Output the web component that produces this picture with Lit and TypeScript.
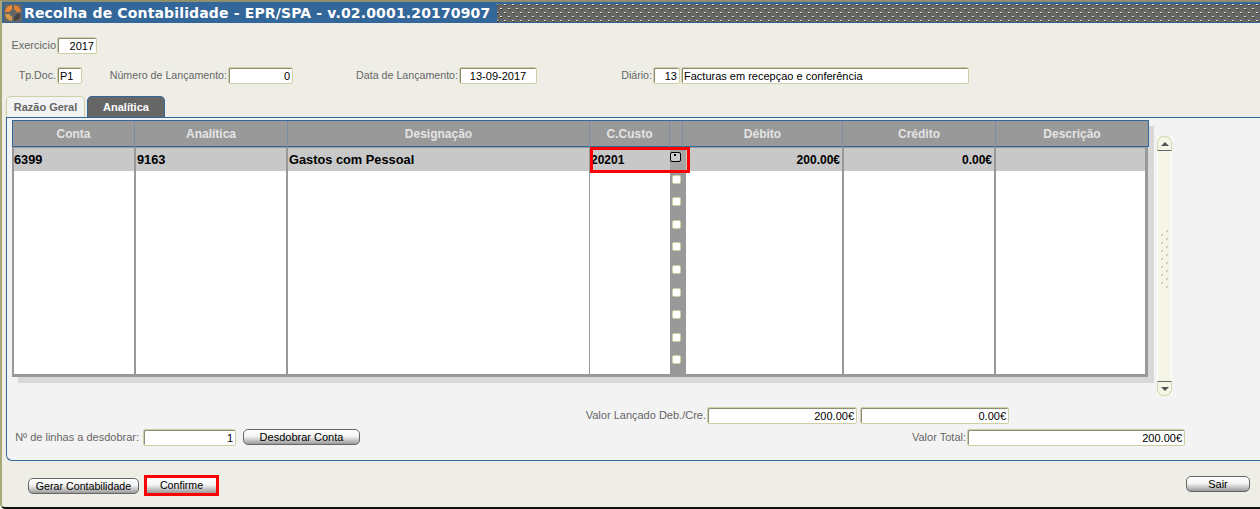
import { LitElement, html, css, svg } from "lit";
import { customElement } from "lit/decorators.js";

const rows = Array.from({ length: 10 }, (_, i) => i);

@customElement("app-root")
export class AppRoot extends LitElement {
  static styles = css`
    :host { display: block; width: 1260px; height: 509px; overflow: hidden; font-family: "Liberation Sans", Arial, sans-serif; font-size: 11px; color: #000; }
    * { box-sizing: border-box; }
    .win { width: 1260px; height: 509px; background: #eeeee6; border-top: 2px solid #8f8f70; border-left: 2px solid #a8a878; border-bottom: 2px solid #111; border-bottom-left-radius: 5px; display: flex; flex-direction: column; overflow: hidden; }
    .title { height: 21px; flex: none; background: #336699; display: flex; align-items: center; padding-left: 2px; }
    .logo { flex: none; display: block; }
    .title-text { flex: none; width: 475px; padding-left: 2px; font-family: "DejaVu Sans", Verdana, sans-serif; font-weight: bold; font-size: 14px; letter-spacing: 0.15px; color: #fff; white-space: nowrap; }
    .dots { flex: 1; height: 18px; display: block; }
    .line { display: flex; align-items: center; height: 17px; flex: none; }
    .l1 { margin-top: 14px; }
    .l2 { margin-top: 13px; }
    .lab { color: #666; white-space: nowrap; line-height: 17px; font-size: 11px; text-align: right; margin-right: 1px; flex: none; }
    .l2 .lab { font-size: 10.67px; }
    .field { height: 17px; background: #fff; border: 1px solid #cfcfa6; border-radius: 2px; box-shadow: inset 1px 1px 0 #8c8c78; line-height: 15px; padding: 1px 2px 0 2px; white-space: nowrap; overflow: hidden; flex: none; text-align: left; }
    .r { text-align: right; }
    .ctr { text-align: center; }
    .w-lab-doc { width: 54px; }
    .w-lab-num { width: 145px; }
    .w-lab-data { width: 165px; }
    .w-lab-diario { width: 115px; }
    .w-40 { width: 40px; }
    .w-25 { width: 25px; }
    .w-65 { width: 65px; }
    .w-78 { width: 78px; }
    .w-27 { width: 27px; margin-right: 1px; }
    .w-288 { width: 288px; }
    .tabs { display: flex; align-items: flex-end; height: 21px; margin-top: 12px; padding-left: 4px; gap: 2px; flex: none; }
    .tab { height: 21px; width: 79px; border: 1px solid #cfcfa6; border-bottom: none; border-radius: 5px 5px 0 0; background: #f3f3f3; color: #666; font-weight: bold; font-size: 11px; text-align: center; line-height: 20px; }
    .tab.on { width: 78px; background: #666; border-color: #336699; color: #fff; }
    .panel { flex: none; height: 344px; margin-left: 4px; background: #f3f3f3; border: 1px solid #336699; border-right: none; border-bottom-left-radius: 6px; padding: 2px 0 0 5px; display: flex; flex-direction: column; }
    .main { display: flex; align-items: flex-start; flex: none; height: 277px; }
    .tablewrap { position: relative; width: 1137px; flex: none; }
    .grid { width: 1136px; box-shadow: 6px 6px 0 #d8d8d8; position: relative; background: #fff; }
    .head { display: grid; width: 1137px; grid-template-columns: 122px 153px 302px 80px 13px 160px 153px 1fr; height: 27px; background: #999; border: 1px solid #336699; }
    .hc { color: #e4e4e4; font-weight: bold; font-size: 12px; text-align: center; line-height: 27px; border-right: 1px solid #7d8ea3; }
    .hc:last-child { border-right: none; }
    .body { width: 1136px; border: 2px solid #999; border-top-width: 1px; border-right-width: 3px; border-bottom-width: 3px; background: #fff; }
    .row { display: grid; grid-template-columns: 122px 152px 302px 80px 16px 158px 152px 1fr; height: 22.6px; font-weight: bold; font-size: 12px; }
    .row.sel { background: #c8c8c8; }
    .c { padding: 5px 2px 0 1px; border-right: 2px solid #999; line-height: 14px; white-space: nowrap; }
    .c.wide { font-size: 12.8px; }
    .c.first { padding-left: 0; }
    .c.thin { border-right-width: 1px; }
    .c.none { border-right: none; }
    .c:last-child { border-right: none; }
    .cc { background: #999; padding: 4px 0 0 2px; display: flex; align-items: flex-start; border: none; }
    .sel .cc { background: #a5a5a5; }
    .chk { width: 9px; height: 9px; background: #fff; border: 1px solid #cfcfa6; border-radius: 2px; }
    .chk.on { width: 11px; height: 10px; background: #ccc; border: 1px solid #000; margin: 0 0 0 -2px; position: relative; }
    .chk.on::after { content: ""; position: absolute; left: 3px; top: 1px; width: 2px; height: 5px; border-top: 2px dotted #000; }
    .redbox { position: absolute; left: 578px; top: 27px; width: 100px; height: 26px; border: 3px solid #f00; }
    .sb { margin-left: 8px; margin-top: 16px; width: 15px; height: 260px; flex: none; display: flex; flex-direction: column; background: #f5f5e8; border-left: 1px solid #fff; border-right: 1px solid #fff; }
    .sb-btn { height: 15px; flex: none; display: flex; justify-content: center; align-items: center; background: #f5f5e8; border: 1px solid #d4d8b0; margin: 0 -1px; }
    .sb-top { border-radius: 7px 7px 0 0; border-bottom: 1px solid #666; }
    .sb-bot { border-radius: 0 0 7px 7px; border-top: 1px solid #666; }
    .sb-mid { flex: 1; display: flex; justify-content: center; align-items: center; padding-bottom: 13px; }
    .tri { width: 0; height: 0; border-left: 4px solid transparent; border-right: 4px solid transparent; }
    .up { border-bottom: 4px solid #555; }
    .down { border-top: 4px solid #555; }
    .vals { display: flex; flex-direction: column; gap: 5px; margin-top: 10px; }
    .vrow { display: flex; align-items: flex-start; height: 17px; }
    .w-lab-val { width: 694px; }
    .w-150 { width: 150px; margin-right: 3px; }
    .w-149 { width: 149px; }
    .w-lab-n { width: 130px; padding-right: 3px; }
    .w-93 { width: 93px; }
    .w-lab-tot { width: 606px; }
    .w-218 { width: 218px; }
    .foot { flex: 1; display: flex; align-items: flex-start; padding: 14px 10px 0 26px; }
    .btn { height: 16px; background: linear-gradient(#fff 0%, #f4f4f4 45%, #9a9a9a 100%); border: 1px solid #666; border-radius: 5px; line-height: 14px; text-align: center; font-size: 10.67px; flex: none; }
    .btn-desd { width: 117px; margin-left: 7px; font-size: 11px; }
    .btn-gerar { width: 111px; margin-top: 3px; }
    .btn-sair { width: 64px; margin-top: 1px; font-size: 11px; }
    .mark { border: 3px solid #f00; margin-left: 5px; flex: none; height: 21px; width: 75px; }
    .mark .btn { width: 69px; height: 15px; border-radius: 0; border: none; }
    .spacer { flex: 1; }
  `;

  private logo() {
    return html`<svg class="logo" width="18" height="18" viewBox="0 0 18 18">
      <rect width="18" height="18" fill="#666"/>
      <path d="M1 8 A8 8 0 0 1 8 1 L8 5.5 A3.5 3.5 0 0 0 5.5 8 Z" fill="#ee8a33"/>
      <path d="M10 1 A8 8 0 0 1 17 8 L12.5 8 A3.5 3.5 0 0 0 10 5.5 Z" fill="#dd7f35"/>
      <path d="M1 10 A8 8 0 0 0 8 17 L8 12.5 A3.5 3.5 0 0 1 5.5 10 Z" fill="#d09a4a"/>
      <path d="M10 17 A8 8 0 0 0 17 10 L12.5 10 A3.5 3.5 0 0 1 10 12.5 Z" fill="#4a4440"/>
    </svg>`;
  }

  private dots() {
    return html`<svg class="dots" width="763" height="18">
      <defs>
        <pattern id="d" width="8" height="8" patternUnits="userSpaceOnUse">
          ${svg`<rect x="3" y="4" width="2" height="1" fill="#e4e4c4"/><rect x="4" y="5" width="1" height="1" fill="#111"/>
          <rect x="7" y="0" width="1" height="1" fill="#e4e4c4"/><rect x="0" y="0" width="1" height="1" fill="#e4e4c4"/><rect x="0" y="1" width="1" height="1" fill="#111"/>`}
        </pattern>
      </defs>
      <rect width="763" height="18" fill="#666"/>
      <rect width="763" height="18" fill="url(#d)"/>
    </svg>`;
  }

  private grip() {
    return html`<svg width="9" height="60" viewBox="0 0 9 60">
      ${[0, 1, 2, 3, 4, 5, 6, 7].map((i) => svg`
        <rect x="7" y="${i * 8}" width="1" height="1" fill="#b0b080"/><rect x="6" y="${i * 8 + 1}" width="1" height="1" fill="#b0b080"/>
      `)}
      ${[0, 1, 2, 3, 4, 5, 6].map((i) => svg`
        <rect x="2" y="${i * 8 + 4}" width="1" height="1" fill="#b0b080"/><rect x="1" y="${i * 8 + 5}" width="1" height="1" fill="#b0b080"/>
      `)}
    </svg>`;
  }

  render() {
    return html`<div class="win">
      <div class="title">${this.logo()}<div class="title-text">Recolha de Contabilidade - EPR/SPA - v.02.0001.20170907</div>${this.dots()}</div>

      <div class="line l1"><span class="lab w-lab-doc">Exercicio</span><div class="field r w-40">2017</div></div>

      <div class="line l2">
        <span class="lab w-lab-doc">Tp.Doc.</span><div class="field w-25">P1</div>
        <span class="lab w-lab-num">Número de Lançamento:</span><div class="field r w-65">0</div>
        <span class="lab w-lab-data">Data de Lançamento:</span><div class="field ctr w-78">13-09-2017</div>
        <span class="lab w-lab-diario">Diário:</span><div class="field r w-27">13</div>
        <div class="field w-288">Facturas em recepçao e conferência</div>
      </div>

      <div class="tabs"><div class="tab">Razão Geral</div><div class="tab on">Analítica</div></div>

      <div class="panel">
        <div class="main">
          <div class="tablewrap">
            <div class="grid">
              <div class="head">
                ${["Conta", "Analítica", "Designação", "C.Custo", "", "Débito", "Crédito", "Descrição"].map((h) => html`<div class="hc">${h}</div>`)}
              </div>
              <div class="body">
                ${rows.map((i) => html`<div class="row ${i === 0 ? "sel" : ""}">
                  <div class="c wide first">${i === 0 ? "6399" : ""}</div>
                  <div class="c wide">${i === 0 ? "9163" : ""}</div>
                  <div class="c wide thin">${i === 0 ? "Gastos com Pessoal" : ""}</div>
                  <div class="c none">${i === 0 ? "20201" : ""}</div>
                  <div class="c cc"><div class="chk ${i === 0 ? "on" : ""}"></div></div>
                  <div class="c r">${i === 0 ? "200.00€" : ""}</div>
                  <div class="c r">${i === 0 ? "0.00€" : ""}</div>
                  <div class="c"></div>
                </div>`)}
              </div>
            </div>
            <div class="redbox"></div>
          </div>
          <div class="sb">
            <div class="sb-btn sb-top"><div class="tri up"></div></div>
            <div class="sb-mid">${this.grip()}</div>
            <div class="sb-btn sb-bot"><div class="tri down"></div></div>
          </div>
        </div>
        <div class="vals">
          <div class="vrow">
            <span class="lab w-lab-val">Valor Lançado Deb./Cre.</span><div class="field r w-150">200.00€</div><div class="field r w-149">0.00€</div>
          </div>
          <div class="vrow">
            <span class="lab w-lab-n">Nº de linhas a desdobrar:</span><div class="field r w-93">1</div>
            <div class="btn btn-desd">Desdobrar Conta</div>
            <span class="lab w-lab-tot">Valor Total:</span><div class="field r w-218">200.00€</div>
          </div>
        </div>
      </div>

      <div class="foot">
        <div class="btn btn-gerar">Gerar Contabilidade</div>
        <div class="mark"><div class="btn">Confirme</div></div>
        <div class="spacer"></div>
        <div class="btn btn-sair">Sair</div>
      </div>
    </div>`;
  }
}
